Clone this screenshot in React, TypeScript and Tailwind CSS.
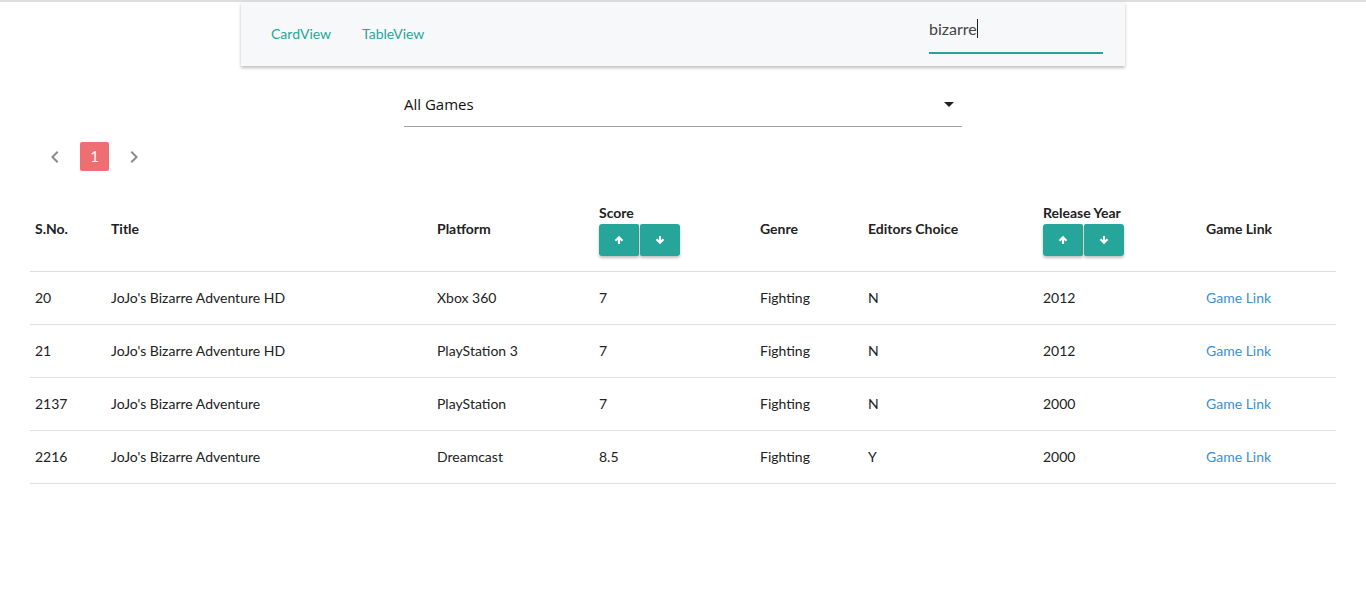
import React from 'react';

const rows = [
  { sno: '20', title: "JoJo's Bizarre Adventure HD", platform: 'Xbox 360', score: '7', genre: 'Fighting', choice: 'N', year: '2012' },
  { sno: '21', title: "JoJo's Bizarre Adventure HD", platform: 'PlayStation 3', score: '7', genre: 'Fighting', choice: 'N', year: '2012' },
  { sno: '2137', title: "JoJo's Bizarre Adventure", platform: 'PlayStation', score: '7', genre: 'Fighting', choice: 'N', year: '2000' },
  { sno: '2216', title: "JoJo's Bizarre Adventure", platform: 'Dreamcast', score: '8.5', genre: 'Fighting', choice: 'Y', year: '2000' },
];

function Arrow({ down }: { down?: boolean }) {
  return (
    <svg width="10" height="10" viewBox="0 0 24 24" className={down ? 'rotate-180' : ''}>
      <path d="M4 12l1.41 1.41L11 7.83V20h2V7.83l5.58 5.59L20 12l-8-8-8 8z" fill="#fff" stroke="#fff" strokeWidth="3" />
    </svg>
  );
}

function SortButtons() {
  return (
    <div className="flex gap-px mt-[2px]">
      <button className="w-10 h-8 bg-[#26a69a] rounded-l-[3px] rounded-r-[2px] shadow-[0_2px_3px_rgba(0,0,0,0.25)] flex items-center justify-center">
        <Arrow />
      </button>
      <button className="w-10 h-8 bg-[#26a69a] rounded-r-[3px] rounded-l-[2px] shadow-[0_2px_3px_rgba(0,0,0,0.25)] flex items-center justify-center">
        <Arrow down />
      </button>
    </div>
  );
}

export default function App() {
  return (
    <div className="min-h-[609px] bg-white text-[#222] font-['Lato',sans-serif] border-t-2 border-[#dddddd]">
      {/* Navbar */}
      <div className="mx-auto w-[884px] h-[64px] bg-[#f7f8fa] shadow-[0_2px_3px_rgba(0,0,0,0.25)] flex items-center justify-between pl-[30px] pr-[22px]">
        <div className="flex gap-[31px] text-[14px] text-[#26a69a] mt-[-1px]">
          <a>CardView</a>
          <a>TableView</a>
        </div>
        <div className="w-[174px] h-[50px] border-b-2 border-[#26a69a] flex items-center pt-[2px] mb-[12px] mt-[2px]">
          <span className="text-[16px] text-[#444] mt-[-1px]">bizarre</span>
          <span className="w-px h-[19px] bg-[#222] mt-[-1px]" />
        </div>
      </div>

      {/* Select */}
      <div className="mx-auto w-[558px] mt-[20px] h-[41px] border-b border-[#9e9e9e] flex items-center justify-between pb-[3px] pr-[8px] font-['Open_Sans',sans-serif]">
        <span className="text-[15px] text-[#111]">All Games</span>
        <svg width="10" height="5" viewBox="0 0 10 5"><path d="M0 0h10L5 5z" fill="#222" /></svg>
      </div>

      {/* Pagination */}
      <div className="flex items-center ml-[43px] mt-[15px] gap-[13px]">
        <svg width="24" height="24" viewBox="0 0 24 24"><path d="M15.41 7.41L14 6l-6 6 6 6 1.41-1.41L10.83 12z" fill="#8a8a8a" /></svg>
        <div className="w-[29px] h-[29px] rounded-[2px] bg-[#ee6e73] text-white text-[15px] flex items-center justify-center">1</div>
        <svg width="24" height="24" viewBox="0 0 24 24"><path d="M10 6L8.59 7.41 13.17 12l-4.58 4.59L10 18l6-6z" fill="#8a8a8a" /></svg>
      </div>

      {/* Table */}
      <div className="px-[30px] mt-[18px]">
        <table className="w-full table-fixed border-collapse text-[14px]">
          <thead>
            <tr className="border-b border-[#e0e0e0] text-left">
              <th className="w-[76px] px-[5px] pt-[15px] pb-[18px] font-bold">S.No.</th>
              <th className="w-[326px] px-[5px] pt-[15px] pb-[18px] font-bold">Title</th>
              <th className="w-[162px] px-[5px] pt-[15px] pb-[18px] font-bold">Platform</th>
              <th className="w-[161px] px-[5px] py-[15px] font-bold">
                <div className="leading-[18px]">Score</div>
                <SortButtons />
              </th>
              <th className="w-[108px] px-[5px] pt-[15px] pb-[18px] font-bold">Genre</th>
              <th className="w-[175px] px-[5px] pt-[15px] pb-[18px] font-bold">Editors Choice</th>
              <th className="w-[163px] px-[5px] py-[15px] font-bold">
                <div className="leading-[18px]">Release Year</div>
                <SortButtons />
              </th>
              <th className="px-[5px] pt-[15px] pb-[18px] font-bold">Game Link</th>
            </tr>
          </thead>
          <tbody>
            {rows.map((r) => (
              <tr key={r.sno} className="border-b border-[#e0e0e0] h-[53px]">
                <td className="px-[5px] pb-[2px]">{r.sno}</td>
                <td className="px-[5px] pb-[2px]">{r.title}</td>
                <td className="px-[5px] pb-[2px]">{r.platform}</td>
                <td className="px-[5px] pb-[2px]">{r.score}</td>
                <td className="px-[5px] pb-[2px]">{r.genre}</td>
                <td className="px-[5px] pb-[2px]">{r.choice}</td>
                <td className="px-[5px] pb-[2px]">{r.year}</td>
                <td className="px-[5px] pb-[2px] text-[#3a8fd9]">Game Link</td>
              </tr>
            ))}
          </tbody>
        </table>
      </div>
    </div>
  );
}
